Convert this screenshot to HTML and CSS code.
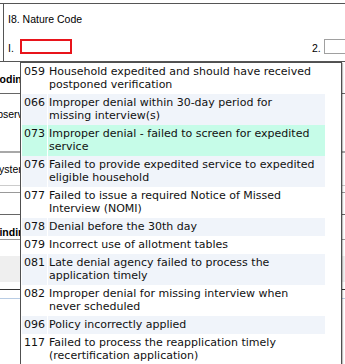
FILE: index.html
```html
<!DOCTYPE html>
<html lang="en">

<head>
    <meta charset="UTF-8">
    <meta name="viewport" content="width=device-width, initial-scale=1.0">
    <title>Nature Code</title>

    <!-- CSS inside the head -->
    <link rel="stylesheet" href="styles.css">
</head>

<body>

    <div class="form">
        <!-- I8 section -->
        <div class="section">
            <div class="section-cell">
                <div class="section-title">I8. Nature Code</div>
                <div class="code-row">
                    <span class="code-label">I.</span>
                    <span class="code-input invalid"></span>
                    <span class="code-label second">2.</span>
                    <span class="code-input"></span>
                </div>
            </div>
        </div>

        <!-- Rows behind the dropdown -->
        <div class="row row-1"><span class="row-label bold">Coding</span></div>
        <div class="row row-2"><span class="row-label">Observed</span></div>
        <div class="row row-3"><span class="row-label">System</span></div>
        <div class="row row-4"></div>
        <div class="row row-5"></div>
        <div class="row row-6"><span class="row-label bold">Finding</span></div>
        <div class="row row-7"></div>
        <div class="row row-8"></div>
        <div class="row row-9"></div>
        <div class="row row-10"></div>

        <!-- Nature code dropdown -->
        <div class="dropdown">
            <table class="code-list">
                <tr><td class="code">059</td><td class="desc">Household expedited and should have received<br>postponed verification</td></tr>
                <tr class="alt"><td class="code">066</td><td class="desc">Improper denial within 30-day period for<br>missing interview(s)</td></tr>
                <tr class="active"><td class="code">073</td><td class="desc">Improper denial - failed to screen for expedited<br>service</td></tr>
                <tr class="alt"><td class="code">076</td><td class="desc">Failed to provide expedited service to expedited<br>eligible household</td></tr>
                <tr><td class="code">077</td><td class="desc">Failed to issue a required Notice of Missed<br>Interview (NOMI)</td></tr>
                <tr class="alt"><td class="code">078</td><td class="desc">Denial before the 30th day</td></tr>
                <tr><td class="code">079</td><td class="desc">Incorrect use of allotment tables</td></tr>
                <tr class="alt"><td class="code">081</td><td class="desc">Late denial agency failed to process the<br>application timely</td></tr>
                <tr><td class="code">082</td><td class="desc">Improper denial for missing interview when<br>never scheduled</td></tr>
                <tr class="alt"><td class="code">096</td><td class="desc">Policy incorrectly applied</td></tr>
                <tr><td class="code">117</td><td class="desc">Failed to process the reapplication timely<br>(recertification application)</td></tr>
            </table>
        </div>
    </div>

</body>

</html>
```

FILE: styles.css
```css
body {
    margin: 0;
    background-color: #fff;
    font-family: "Liberation Sans", Arial, sans-serif;
    font-size: 10px;
    color: #000;
    overflow: hidden;
}

.form {
    position: relative;
    width: 345px;
    height: 364px;
}

/* I8 section */
.section {
    margin-top: 3px;
    height: 57px;
    border-top: 1px solid #555;
    border-bottom: 1px solid #555;
    overflow: hidden;
}

.section-cell {
    margin-left: 3px;
    height: 100%;
    border-left: 1px solid #555;
    padding-left: 4px;
    box-sizing: border-box;
}

.section-title {
    padding-top: 9px;
    height: 26px;
    box-sizing: border-box;
    font-size: 10.5px;
}

.code-row {
    display: flex;
    align-items: center;
    padding-top: 9px;
}

.code-label {
    flex-shrink: 0;
    width: 12px;
    padding-top: 3px;
    font-size: 10.5px;
}

.code-label.second {
    margin-left: 240px;
}

.code-input {
    flex-shrink: 0;
    width: 50px;
    height: 13px;
    border: 1px solid #a0a0a0;
}

.code-input.invalid {
    width: 48px;
    height: 11px;
    border: 2px solid #e8141b;
}

/* Rows behind the dropdown */
.row {
    box-sizing: border-box;
    display: flex;
    align-items: center;
    overflow: hidden;
    white-space: nowrap;
}

.row-label {
    font-size: 10.5px;
}

.row-label.bold {
    font-weight: bold;
}

.row-1 { height: 32px; border-bottom: 1px solid #666; align-items: flex-end; padding-bottom: 8px; }
.row-1 .row-label { margin-left: -8px; }
.row-2 { height: 59px; border-bottom: 2px solid #a8a8a8; align-items: flex-start; padding-top: 14px; }
.row-2 .row-label { margin-left: -11px; }
.row-3 { height: 33px; border-bottom: 1px solid #ccc; }
.row-3 .row-label { margin-left: -8px; }
.row-4 { height: 7px; border-bottom: 1px solid #999; }
.row-5 { height: 22px; border-bottom: 1px solid #666; }
.row-6 { height: 25px; border-bottom: 1px solid #999; align-items: flex-end; padding-bottom: 1px; }
.row-6 .row-label { margin-left: -7px; }
.row-7 { height: 16px; }
.row-8 { height: 26px; background-color: #efefef; }
.row-9 { height: 8px; border-bottom: 1px solid #333; }
.row-10 { height: 9px; border-bottom: 1px solid #b8cce4; }

/* Dropdown list */
.dropdown {
    position: absolute;
    left: 20px;
    top: 59px;
    width: 320px;
    height: 302px;
    background-color: #fff;
    border: 1px solid #505050;
    box-shadow: 1px 1px 1px rgba(0, 0, 0, 0.25);
}

.code-list {
    border-collapse: separate;
    border-spacing: 1px 0;
    font-family: "DejaVu Sans", Verdana, sans-serif;
    font-size: 11px;
    line-height: 13px;
    color: #111;
}

.code-list td {
    padding: 2px 0 3px 0;
    vertical-align: top;
    white-space: nowrap;
}

.code-list .code {
    width: 23px;
    padding-left: 2px;
}

.code-list .desc {
    width: 276px;
    padding-left: 1px;
}

.code-list .alt td {
    background-color: #f0f4fa;
}

.code-list .active td {
    background-color: #c6fce8;
}
```
